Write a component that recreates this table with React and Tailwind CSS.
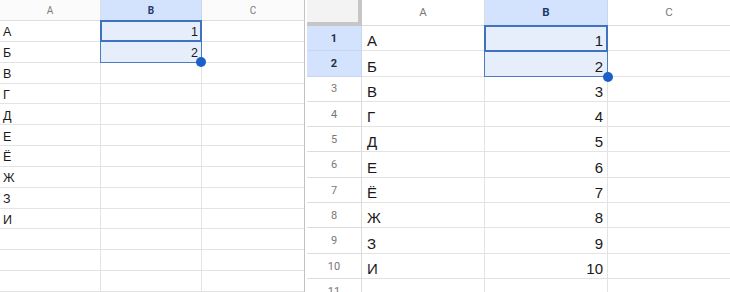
import React from "react";

const letters = ["А", "Б", "В", "Г", "Д", "Е", "Ё", "Ж", "З", "И"];
const cellFont = "font-['Liberation_Sans',Arial,sans-serif]";
const headFont = "font-[Roboto,'Liberation_Sans',sans-serif]";

function FillHandle({ className }) {
  return (
    <div
      className={`absolute w-[10px] h-[10px] rounded-full bg-[#1b5fc9] ${className}`}
    />
  );
}

function SmallSheet() {
  const rows = Array.from({ length: 13 }, (_, i) => i);
  return (
    <div className={`relative w-[305px] shrink-0 border-r border-[#c2c2c2] flex flex-col ${cellFont}`}>
      <div className={`grid grid-cols-[101px_101px_102px] h-[21px] shrink-0 ${headFont} text-[10px]`}>
        <div className="flex items-center justify-center border-r border-b border-[#dedede] text-[#7a7a7a] bg-[#fbfbfb]">
          A
        </div>
        <div className="flex items-center justify-center border-r border-b border-[#c8d6ee] bg-[#d3e3fd] text-[#1f3a66] font-bold">
          B
        </div>
        <div className="flex items-center justify-center border-b border-[#dedede] text-[#7a7a7a] bg-[#fbfbfb]">
          C
        </div>
      </div>
      {rows.map((i) => {
        const sel = i < 2;
        return (
          <div key={i} className="grid grid-cols-[101px_101px_102px] h-[20.85px] shrink-0 text-[12.5px] text-[#1a1a1a]">
            <div className="flex items-end pl-[3px] pb-[2px] border-r border-b border-[#e3e3e3] leading-none">
              {letters[i] ?? ""}
            </div>
            <div
              className={`flex items-end justify-end pr-[3px] pb-[2px] border-r border-b border-[#e3e3e3] leading-none ${
                sel ? "bg-[#e6eefb]" : ""
              }`}
            >
              {sel ? i + 1 : ""}
            </div>
            <div className="border-b border-[#e3e3e3]" />
          </div>
        );
      })}
      {/* selection range B1:B2 */}
      <div className="absolute left-[100px] top-[20px] w-[102px] h-[43px] border border-[#4c7cc0] pointer-events-none" />
      <div className="absolute left-[100px] top-[20px] w-[102px] h-[22px] border-2 border-[#3f73bf] pointer-events-none" />
      <FillHandle className="left-[196px] top-[57px]" />
    </div>
  );
}

function BigSheet() {
  const rows = Array.from({ length: 11 }, (_, i) => i);
  return (
    <div className={`relative flex-1 ml-[2px] flex flex-col ${cellFont}`}>
      <div className={`grid grid-cols-[55px_123px_123px_1fr] h-[26px] shrink-0 ${headFont} text-[11.5px]`}>
        <div className="bg-[#f3f3f3] border-r-[4px] border-b-[4px] border-[#c6c6c6]" />
        <div className="flex items-center justify-center border-r border-b border-[#dcdcdc] text-[#7a7a7a]">
          A
        </div>
        <div className="flex items-center justify-center border-r border-b border-[#c8d6ee] bg-[#d3e3fd] text-[#1f3a66] font-bold">
          B
        </div>
        <div className="flex items-center justify-center border-b border-[#dcdcdc] text-[#7a7a7a]">
          C
        </div>
      </div>
      {rows.map((i) => {
        const sel = i < 2;
        const filled = i < 10;
        return (
          <div key={i} className="grid grid-cols-[55px_123px_123px_1fr] h-[25.3px] shrink-0 text-[15px] text-[#1a1a1a]">
            <div
              className={`flex items-center justify-center pt-[2px] border-r border-b ${headFont} text-[11px] ${
                sel
                  ? "bg-[#d3e3fd] border-[#c8d6ee] text-[#1f2d45] font-bold"
                  : "border-[#dcdcdc] text-[#777]"
              }`}
            >
              {i + 1}
            </div>
            <div className="flex items-end pl-[5px] pb-[2px] border-r border-b border-[#e3e3e3] leading-none">
              {filled ? letters[i] : ""}
            </div>
            <div
              className={`flex items-end justify-end pr-[4px] pb-[2px] border-r border-b border-[#e3e3e3] leading-none ${
                sel ? "bg-[#e6eefb]" : ""
              }`}
            >
              {filled ? i + 1 : ""}
            </div>
            <div className="border-b border-[#e3e3e3]" />
          </div>
        );
      })}
      {/* selection range B1:B2 */}
      <div className="absolute left-[177px] top-[25px] w-[124px] h-[52px] border border-[#4c7cc0] pointer-events-none" />
      <div className="absolute left-[177px] top-[25px] w-[124px] h-[27px] border-2 border-[#3f73bf] pointer-events-none" />
      <FillHandle className="left-[296px] top-[72px]" />
    </div>
  );
}

export default function App() {
  return (
    <div className="w-[730px] h-[292px] overflow-hidden bg-white flex">
      <SmallSheet />
      <BigSheet />
    </div>
  );
}
